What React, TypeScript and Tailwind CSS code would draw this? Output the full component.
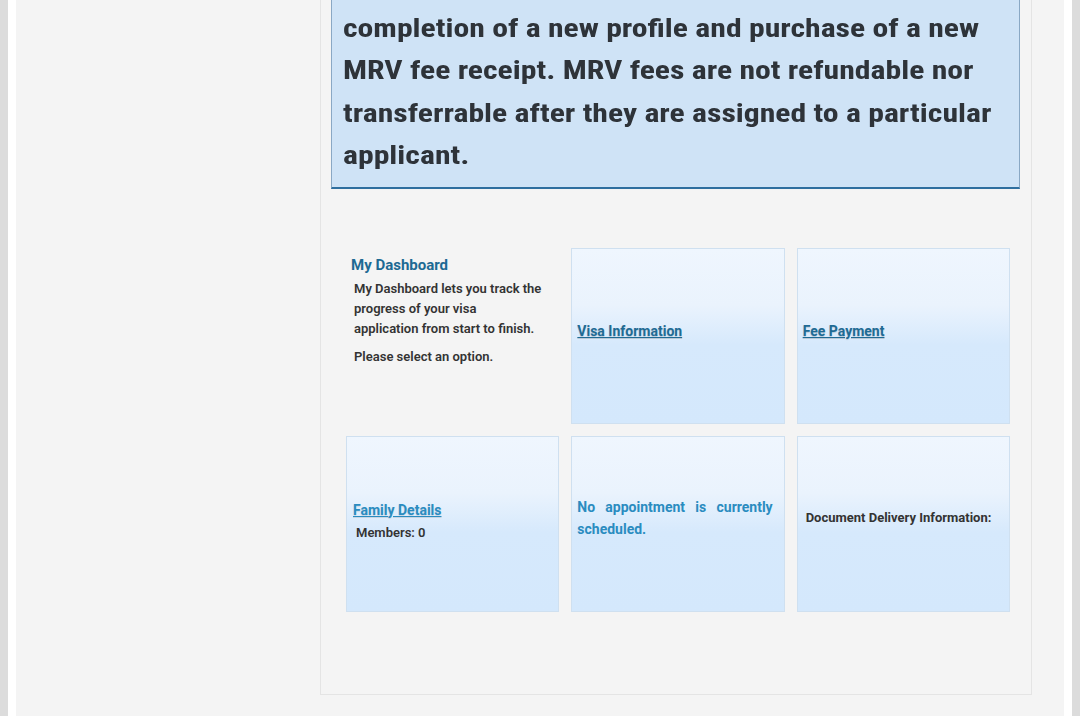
export default function App() {
  const card =
    "border border-[#cfe0f0] bg-[linear-gradient(180deg,#eff6fe_0%,#eaf3fd_32%,#d6e9fc_55%,#d4e8fc_100%)]";

  return (
    <div className="h-[716px] w-[1080px] overflow-hidden bg-[#dcdcdc] px-2 font-['Roboto','Liberation_Sans',sans-serif]">
      <div className="h-full bg-white px-2">
        <div className="flex h-full flex-col bg-[#f4f4f4] pb-[21px] pl-[304px] pr-[32px]">
          {/* content panel */}
          <div className="flex flex-1 flex-col overflow-hidden border-x border-b border-[#e4e4e4]">
            {/* notice banner */}
            <div className="-mt-[46px] ml-[10px] w-[689px] border-x border-b-2 border-x-[#8aa8c4] border-b-[#2f6f9f] bg-[#cfe3f6] pb-[10px] pl-[11px] pr-[10px] pt-[10px] text-[#2e3339]">
              <p className="w-[548px] origin-left scale-x-[1.22] whitespace-nowrap font-['Roboto',sans-serif] text-[26px] font-bold leading-[42.5px] [font-stretch:75%]">
                If the information is incorrect, any changes may require
                <br />
                completion of a new profile and purchase of a new
                <br />
                MRV fee receipt. MRV fees are not refundable nor
                <br />
                transferrable after they are assigned to a particular
                <br />
                applicant.
              </p>
            </div>

            {/* dashboard grid */}
            <div className="ml-[25px] mt-[59px] grid w-[664px] grid-cols-3 grid-rows-[176px_176px] gap-[12px]">
              <div className="pl-[5px] pt-[8px]">
                <h2 className="text-[15px] font-bold leading-[18px] text-[#1d6a93]">My Dashboard</h2>
                <p className="mt-[5px] w-[191px] pl-[3px] text-[13px] font-semibold leading-[20px] text-[#333]">
                  My Dashboard lets you track the progress of your visa application from start to finish.
                </p>
                <p className="mt-[8px] pl-[3px] text-[13px] font-semibold leading-[20px] text-[#333]">
                  Please select an option.
                </p>
              </div>

              <div className={`${card} flex items-center pb-[9px] pl-[5px]`}>
                <a className="text-[14px] font-bold text-[#1f6b94] underline [text-shadow:0_1px_1px_rgba(0,0,0,0.15)]">
                  Visa Information
                </a>
              </div>

              <div className={`${card} flex items-center pb-[9px] pl-[5px]`}>
                <a className="text-[14px] font-bold text-[#1f6b94] underline [text-shadow:0_1px_1px_rgba(0,0,0,0.15)]">
                  Fee Payment
                </a>
              </div>

              <div className={`${card} flex flex-col justify-center pb-[6px] pl-[6px]`}>
                <a className="text-[14px] font-bold leading-[22px] text-[#2a8cc0] underline [text-shadow:0_1px_1px_rgba(0,0,0,0.1)]">
                  Family Details
                </a>
                <p className="mt-[2px] pl-[3px] text-[13px] font-semibold leading-[20px] text-[#333]">Members: 0</p>
              </div>

              <div className={`${card} flex items-center pb-[12px] pl-[5px] pr-[11px]`}>
                <p className="text-justify text-[14px] font-bold leading-[22px] text-[#2a8cc0]">
                  No appointment is currently scheduled.
                </p>
              </div>

              <div className={`${card} flex items-center pb-[12px] pl-[8px]`}>
                <p className="text-[13px] font-bold text-[#333]">Document Delivery Information:</p>
              </div>
            </div>
          </div>
        </div>
      </div>
    </div>
  );
}
